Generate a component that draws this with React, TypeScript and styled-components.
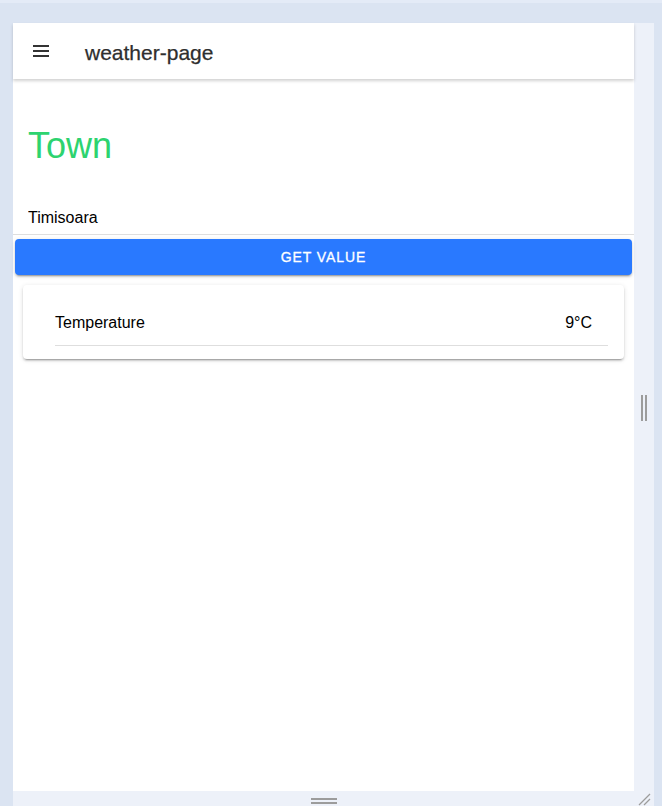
import React from 'react';
import styled, { createGlobalStyle } from 'styled-components';

const GlobalStyle = createGlobalStyle`
  html, body {
    margin: 0;
    padding: 0;
    background: #dbe4f2;
    font-family: "Liberation Sans", Arial, sans-serif;
  }
`;

const Screen = styled.div`
  width: 662px;
  height: 806px;
  box-sizing: border-box;
  border-top: 3px solid #e4ebf7;
  padding: 20px 8px 0 13px;
  overflow: hidden;
`;

const Frame = styled.div`
  position: relative;
  width: 641px;
  height: 783px;
  background: #edf1f9;
  padding: 0 20px 15px 0;
  box-sizing: border-box;
`;

const Viewport = styled.div`
  width: 621px;
  height: 768px;
  background: #ffffff;
  display: flex;
  flex-direction: column;
`;

const Toolbar = styled.header`
  height: 56px;
  display: flex;
  align-items: center;
  padding-left: 12px;
  box-shadow: 0 2px 3px rgba(0, 0, 0, 0.18);
  position: relative;
  z-index: 1;
`;

const MenuButton = styled.button`
  width: 32px;
  height: 32px;
  border: 0;
  padding: 0;
  background: transparent;
  display: flex;
  align-items: center;
  justify-content: center;
`;

const Title = styled.h1`
  margin: 3px 0 0 28px;
  font-size: 21px;
  font-weight: 400;
  color: #2e2e2e;
  -webkit-text-stroke: 0.25px #2e2e2e;
`;

const Content = styled.main`
  display: flex;
  flex-direction: column;
  padding-top: 46px;
`;

const Heading = styled.h2`
  margin: 0 0 0 15px;
  font-size: 36px;
  font-weight: 400;
  color: #2dd36f;
  line-height: 42px;
`;

const InputRow = styled.div`
  margin-top: 35px;
  height: 32px;
  display: flex;
  align-items: center;
  padding-left: 15px;
  border-bottom: 1px solid #dedede;
`;

const Input = styled.input`
  border: 0;
  outline: none;
  font-family: inherit;
  font-size: 16px;
  color: #000;
  padding: 0;
  width: 100%;
  background: transparent;
`;

const Button = styled.button`
  margin: 4px 2px 0;
  height: 36px;
  border: 0;
  border-radius: 4px;
  background: #2979ff;
  color: #ffffff;
  font-family: inherit;
  font-size: 14px;
  font-weight: 400;
  -webkit-text-stroke: 0.3px #ffffff;
  letter-spacing: 0.9px;
  text-transform: uppercase;
  box-shadow: 0 3px 1px -2px rgba(0, 0, 0, 0.2), 0 2px 2px 0 rgba(0, 0, 0, 0.14),
    0 1px 5px 0 rgba(0, 0, 0, 0.12);
`;

const Card = styled.section`
  margin: 10px 10px 0;
  border-radius: 4px;
  background: #ffffff;
  padding: 16px 16px 13px 32px;
  box-shadow: 0 3px 1px -2px rgba(0, 0, 0, 0.2), 0 2px 2px 0 rgba(0, 0, 0, 0.14),
    0 1px 5px 0 rgba(0, 0, 0, 0.12);
`;

const Item = styled.div`
  height: 44px;
  display: flex;
  align-items: center;
  justify-content: space-between;
  padding-right: 16px;
  border-bottom: 1px solid #dedede;
  font-size: 16px;
  color: #000;
`;

const SideHandle = styled.div`
  position: absolute;
  right: 7px;
  top: 372px;
  width: 6px;
  height: 26px;
  border-left: 2px solid #9c9c9c;
  border-right: 2px solid #9c9c9c;
  box-sizing: border-box;
`;

const BottomHandle = styled.div`
  position: absolute;
  left: 298px;
  bottom: 2px;
  width: 26px;
  height: 6px;
  border-top: 2px solid #9c9c9c;
  border-bottom: 2px solid #9c9c9c;
  box-sizing: border-box;
`;

const Corner = styled.svg`
  position: absolute;
  right: 3px;
  bottom: 0;
`;

const MenuIcon = () => (
  <svg width="18" height="14" viewBox="0 0 18 14">
    <rect x="1" y="1" width="16" height="2" fill="#333" />
    <rect x="1" y="6" width="16" height="2" fill="#333" />
    <rect x="1" y="11" width="16" height="2" fill="#333" />
  </svg>
);

const App: React.FC = () => {
  return (
    <>
      <GlobalStyle />
      <Screen>
        <Frame>
          <Viewport>
            <Toolbar>
              <MenuButton aria-label="menu">
                <MenuIcon />
              </MenuButton>
              <Title>weather-page</Title>
            </Toolbar>
            <Content>
              <Heading>Town</Heading>
              <InputRow>
                <Input defaultValue="Timisoara" />
              </InputRow>
              <Button>Get value</Button>
              <Card>
                <Item>
                  <span>Temperature</span>
                  <span>9°C</span>
                </Item>
              </Card>
            </Content>
          </Viewport>
          <SideHandle />
          <BottomHandle />
          <Corner width="14" height="14" viewBox="0 0 14 14">
            <line x1="2" y1="13" x2="13" y2="2" stroke="#9c9c9c" strokeWidth="1.2" />
            <line x1="7" y1="13" x2="13" y2="7" stroke="#9c9c9c" strokeWidth="1.2" />
          </Corner>
        </Frame>
      </Screen>
    </>
  );
};

export default App;
